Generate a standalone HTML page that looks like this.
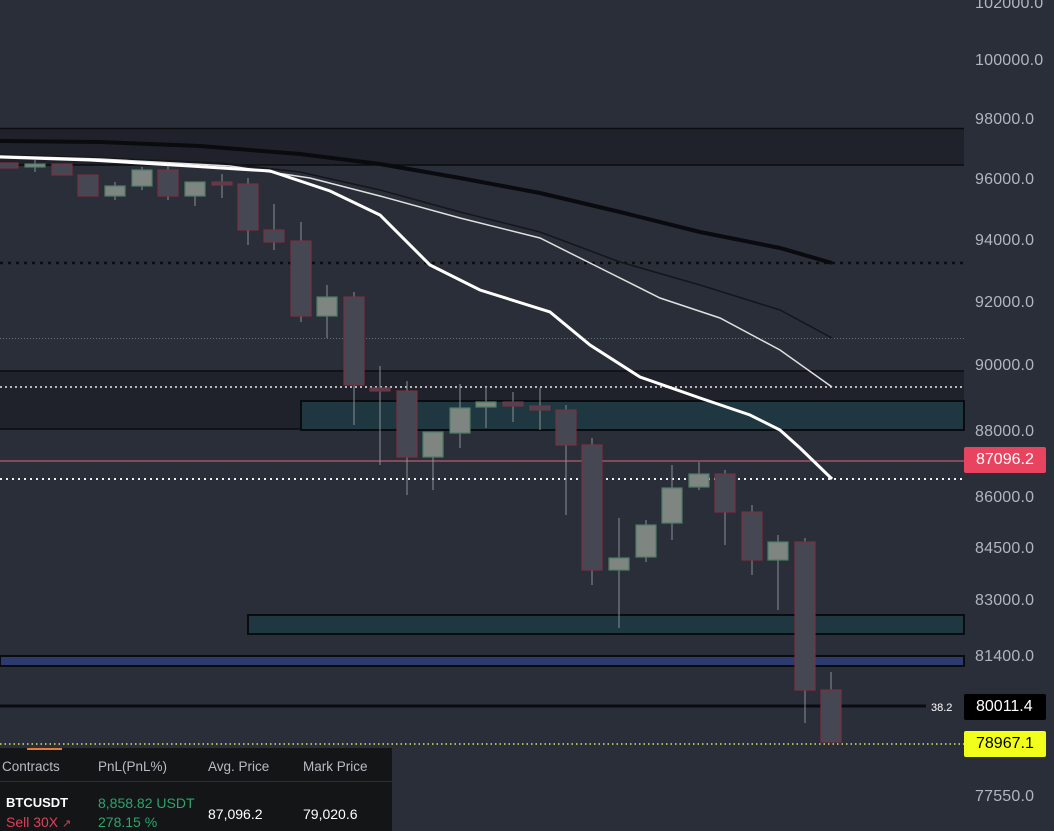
<!DOCTYPE html>
<html><head><meta charset="utf-8"><style>
html,body{margin:0;padding:0;background:#2a2e39;width:1054px;height:831px;overflow:hidden;font-family:"Liberation Sans",sans-serif}
svg{position:absolute;left:0;top:0}
.ax{position:absolute;left:975px;color:#b2b5be;font-size:16px;letter-spacing:0.2px}
.tag{position:absolute;left:964px;width:82px;height:26px;line-height:26px;font-size:16px;padding-left:12px;box-sizing:border-box;border-radius:2px}
#panel{position:absolute;left:0;top:748px;width:392px;height:83px;background:#141517}
#panel .h{position:absolute;top:11px;color:#b8bbc2;font-size:13.5px}
#panel .v{position:absolute;font-size:14px;color:#fff}
</style></head><body>
<svg width="1054" height="831" viewBox="0 0 1054 831">
<rect x="0" y="128" width="964" height="37" fill="#1f222b"/>
<line x1="0" y1="128.5" x2="964" y2="128.5" stroke="#0b0c10" stroke-width="1.5"/>
<line x1="0" y1="165" x2="964" y2="165" stroke="#0b0c10" stroke-width="1.5"/>
<rect x="0" y="371" width="964" height="58" fill="#1f222b"/>
<line x1="0" y1="371" x2="964" y2="371" stroke="#0b0c10" stroke-width="1.5"/>
<line x1="0" y1="429" x2="964" y2="429" stroke="#0b0c10" stroke-width="1.5"/>
<rect x="301" y="401" width="663" height="29" fill="#1f3740" stroke="#0b0c10" stroke-width="2"/>
<rect x="248" y="615" width="716" height="19" fill="#1f3740" stroke="#0b0c10" stroke-width="2"/>
<rect x="0" y="656" width="964" height="10" fill="#2d3a6e" stroke="#0b0c10" stroke-width="2"/>
<line x1="0" y1="706" x2="926" y2="706" stroke="#0b0c10" stroke-width="3"/>
<line x1="0" y1="338.5" x2="964" y2="338.5" stroke="#6a6e78" stroke-width="1" stroke-dasharray="1 2"/>
<line x1="0" y1="263" x2="964" y2="263" stroke="#0b0c10" stroke-width="2.5" stroke-dasharray="3 5"/>
<line x1="0" y1="387" x2="964" y2="387" stroke="#e8e8e8" stroke-width="1.5" stroke-dasharray="2 3"/>
<line x1="0" y1="479" x2="964" y2="479" stroke="#f0f0f0" stroke-width="2" stroke-dasharray="2 4"/>
<line x1="0" y1="461" x2="964" y2="461" stroke="#d9687a" stroke-width="1"/>
<line x1="0" y1="744" x2="964" y2="744" stroke="#d8e06a" stroke-width="1.5" stroke-dasharray="1.5 3"/>
<path d="M0 141 L100 142 L200 146 L300 154 L380 164 L460 178 L540 193 L620 212 L700 232 L780 248 L832 263" fill="none" stroke="#0a0b0e" stroke-width="4"/>
<path d="M0 155 L100 158 L220 163 L300 172 L380 190 L460 212 L540 232 L620 262 L700 285 L780 310 L832 338" fill="none" stroke="#14161b" stroke-width="1.5"/>
<path d="M0 156 L100 159 L230 166 L310 178 L380 196 L460 218 L540 238 L600 268 L660 298 L720 318 L780 350 L832 387" fill="none" stroke="#e0e0e0" stroke-width="1.5"/>
<path d="M0 157 L90 160 L190 166 L270 171 L330 191 L380 215 L430 265 L480 290 L550 312 L590 345 L640 377 L700 398 L750 415 L780 430 L800 448 L832 479" fill="none" stroke="#fff" stroke-width="3"/>
<g stroke="#8a8d94" stroke-width="1">
<line x1="35" y1="160" x2="35" y2="172"/><line x1="115" y1="182" x2="115" y2="200"/><line x1="142" y1="167" x2="142" y2="190"/>
<line x1="168" y1="166" x2="168" y2="200"/><line x1="195" y1="182" x2="195" y2="206"/><line x1="222" y1="174" x2="222" y2="198"/>
<line x1="248" y1="178" x2="248" y2="245"/><line x1="274" y1="204" x2="274" y2="250"/><line x1="301" y1="222" x2="301" y2="322"/>
<line x1="327" y1="285" x2="327" y2="338"/><line x1="354" y1="292" x2="354" y2="425"/><line x1="380" y1="366" x2="380" y2="465"/>
<line x1="407" y1="381" x2="407" y2="495"/><line x1="433" y1="432" x2="433" y2="490"/><line x1="460" y1="384" x2="460" y2="448"/>
<line x1="486" y1="387" x2="486" y2="428"/><line x1="513" y1="392" x2="513" y2="422"/><line x1="540" y1="388" x2="540" y2="430"/>
<line x1="566" y1="405" x2="566" y2="515"/><line x1="592" y1="438" x2="592" y2="585"/><line x1="619" y1="518" x2="619" y2="628"/>
<line x1="646" y1="520" x2="646" y2="562"/><line x1="672" y1="465" x2="672" y2="540"/><line x1="699" y1="462" x2="699" y2="490"/>
<line x1="725" y1="470" x2="725" y2="545"/><line x1="752" y1="505" x2="752" y2="575"/><line x1="778" y1="535" x2="778" y2="610"/>
<line x1="805" y1="538" x2="805" y2="723"/><line x1="831" y1="672" x2="831" y2="742"/>
</g>
<g fill="#454853" stroke="#7a3040" stroke-width="1.2">
<rect x="-2" y="163" width="20" height="5"/><rect x="52" y="164" width="20" height="11"/><rect x="78" y="175" width="20" height="21"/>
<rect x="158" y="170" width="20" height="26"/><rect x="212" y="182" width="20" height="3"/><rect x="238" y="184" width="20" height="46"/>
<rect x="264" y="230" width="20" height="12"/><rect x="291" y="241" width="20" height="75"/><rect x="344" y="297" width="20" height="88"/>
<rect x="370" y="388" width="20" height="3"/><rect x="397" y="391" width="20" height="66"/><rect x="503" y="402" width="20" height="4"/>
<rect x="530" y="406" width="20" height="4"/><rect x="556" y="410" width="20" height="35"/><rect x="582" y="445" width="20" height="125"/>
<rect x="715" y="474" width="20" height="38"/><rect x="742" y="512" width="20" height="48"/><rect x="795" y="542" width="20" height="148"/>
<rect x="821" y="690" width="20" height="52"/>
</g>
<g fill="#7f8682" stroke="#4f7d63" stroke-width="1.2">
<rect x="25" y="164" width="20" height="3"/><rect x="105" y="186" width="20" height="10"/><rect x="132" y="170" width="20" height="16"/>
<rect x="185" y="182" width="20" height="14"/><rect x="317" y="297" width="20" height="19"/><rect x="423" y="432" width="20" height="25"/>
<rect x="450" y="408" width="20" height="25"/><rect x="476" y="402" width="20" height="5"/><rect x="609" y="558" width="20" height="12"/>
<rect x="636" y="525" width="20" height="32"/><rect x="662" y="488" width="20" height="35"/><rect x="689" y="474" width="20" height="13"/>
<rect x="768" y="542" width="20" height="18"/>
</g>
<text x="931" y="711" fill="#fff" font-size="11" font-family="Liberation Sans">38.2</text>
</svg>
<div class="ax" style="top:-5px">102000.0</div>
<div class="ax" style="top:52px">100000.0</div>
<div class="ax" style="top:111px">98000.0</div>
<div class="ax" style="top:171px">96000.0</div>
<div class="ax" style="top:232px">94000.0</div>
<div class="ax" style="top:294px">92000.0</div>
<div class="ax" style="top:357px">90000.0</div>
<div class="ax" style="top:423px">88000.0</div>
<div class="ax" style="top:489px">86000.0</div>
<div class="ax" style="top:540px">84500.0</div>
<div class="ax" style="top:592px">83000.0</div>
<div class="ax" style="top:648px">81400.0</div>
<div class="ax" style="top:788px">77550.0</div>
<div class="tag" style="top:447px;background:#e8445f;color:#fff">87096.2</div>
<div class="tag" style="top:694px;background:#000;color:#fff">80011.4</div>
<div class="tag" style="top:731px;background:#f2ff1a;color:#000">78967.1</div>
<div id="panel">
<div style="position:absolute;left:27px;top:0;width:35px;height:2px;background:#e67a3a"></div>
<div style="position:absolute;left:0;top:33px;width:392px;height:1px;background:#2c2d31"></div>
<div class="h" style="left:2px">Contracts</div>
<div class="h" style="left:98px">PnL(PnL%)</div>
<div class="h" style="left:208px">Avg. Price</div>
<div class="h" style="left:303px">Mark Price</div>
<div class="v" style="left:6px;top:47px;font-weight:bold;font-size:13px">BTCUSDT</div>
<div class="v" style="left:6px;top:66px;color:#e0405a">Sell 30X <span style="font-size:11px">&#x2197;</span></div>
<div class="v" style="left:98px;top:47px;color:#2fa36b">8,858.82 USDT</div>
<div class="v" style="left:98px;top:66px;color:#2fa36b">278.15 %</div>
<div class="v" style="left:208px;top:58px">87,096.2</div>
<div class="v" style="left:303px;top:58px">79,020.6</div>
</div>
</body></html>
